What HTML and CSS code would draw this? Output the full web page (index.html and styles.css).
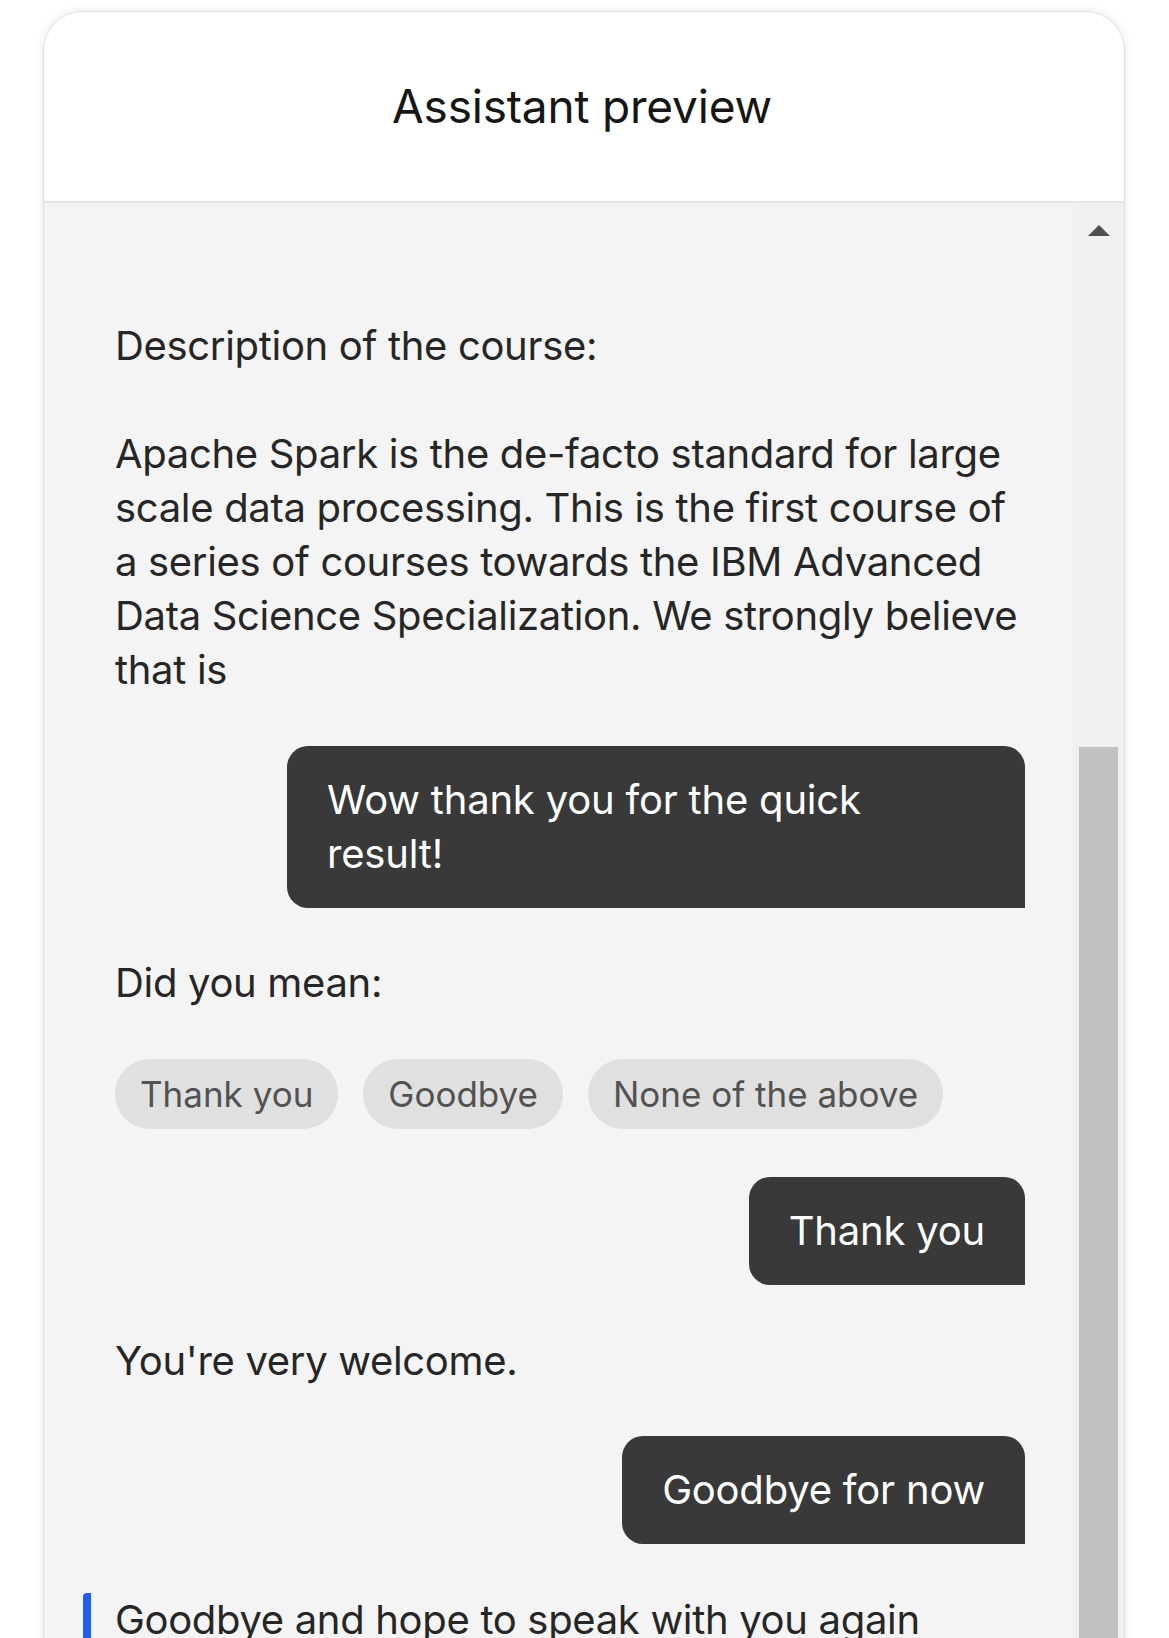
FILE: index.html
```html
<!DOCTYPE html>
<html lang="en">
<head>
<meta charset="utf-8">
<title>Assistant preview</title>
<link rel="stylesheet" href="styles.css">
</head>
<body>
<div class="card">
  <header class="card-header">
    <h1 class="title">Assistant preview</h1>
  </header>
  <div class="card-body">
    <div class="messages">
      <div class="msg bot">
        <p class="text">Description of the course:<br><br>Apache Spark is the de-facto standard for large scale data processing. This is the first course of a series of courses towards the IBM Advanced Data Science Specialization. We strongly believe that is</p>
      </div>
      <div class="msg user">
        <div class="bubble">Wow thank you for the quick result!</div>
      </div>
      <div class="msg bot">
        <p class="text">Did you mean:</p>
      </div>
      <div class="chips">
        <button class="chip">Thank you</button>
        <button class="chip">Goodbye</button>
        <button class="chip">None of the above</button>
      </div>
      <div class="msg user">
        <div class="bubble">Thank you</div>
      </div>
      <div class="msg bot">
        <p class="text">You're very welcome.</p>
      </div>
      <div class="msg user">
        <div class="bubble">Goodbye for now</div>
      </div>
      <div class="msg bot focused">
        <p class="text">Goodbye and hope to speak with you again</p>
      </div>
    </div>
    <div class="scrollbar">
      <span class="arrow"></span>
      <div class="thumb"></div>
    </div>
  </div>
</div>
</body>
</html>
```

FILE: styles.css
```css
html, body {
  margin: 0;
  padding: 0;
  height: 100%;
  overflow: hidden;
  background: #ffffff;
}

body {
  font-family: "Inter", "Noto Sans", "Liberation Sans", sans-serif;
  color: #262626;
}

.card {
  margin: 11px 0 0 43px;
  width: 1082px;
  height: 1700px;
  box-sizing: border-box;
  border: 1px solid #e2e2e2;
  border-radius: 40px 40px 0 0;
  box-shadow: 0 0 10px rgba(0, 0, 0, 0.10);
  background: #f4f4f4;
  overflow: hidden;
  display: flex;
  flex-direction: column;
}

.card-header {
  height: 189px;
  flex: none;
  background: #ffffff;
  border-bottom: 2px solid #e4e4e4;
  display: flex;
  align-items: center;
  justify-content: center;
}

.title {
  margin: 0 0 0 -4px;
  padding-bottom: 2px;
  font-weight: 400;
  font-size: 46px;
  color: #161616;
  letter-spacing: -0.2px;
}

.card-body {
  flex: 1;
  display: flex;
}

.messages {
  flex: 1;
  padding: 116px 48px 0 71px;
  display: flex;
  flex-direction: column;
  gap: 48.5px;
}

.text {
  margin: 0;
  font-size: 40px;
  line-height: 54px;
  color: #262626;
  letter-spacing: -0.32px;
}

.msg.user {
  display: flex;
  justify-content: flex-end;
}

.bubble {
  max-width: 738px;
  box-sizing: border-box;
  padding: 27px 40px;
  background: #393939;
  color: #ffffff;
  font-size: 40px;
  line-height: 54px;
  letter-spacing: -0.2px;
  border-radius: 21px 21px 0 21px;
}

.chips {
  display: flex;
  gap: 25px;
}

.chip {
  height: 70px;
  padding: 0 25px;
  border: none;
  border-radius: 35px;
  background: #e0e0e0;
  color: #525252;
  font-family: inherit;
  font-size: 35px;
}

.focused {
  margin-left: -32px;
  padding-left: 24px;
  border-left: 8px solid #1f5cf0;
  border-radius: 4px;
}

.scrollbar {
  width: 51px;
  flex: none;
  background: #f0f0f0;
  display: flex;
  flex-direction: column;
  align-items: center;
}

.arrow {
  margin-top: 22px;
  width: 0;
  height: 0;
  border-left: 11px solid transparent;
  border-right: 11px solid transparent;
  border-bottom: 11px solid #505050;
}

.thumb {
  margin-top: 511px;
  width: 39px;
  flex: 1;
  background: #c1c1c1;
}
```
